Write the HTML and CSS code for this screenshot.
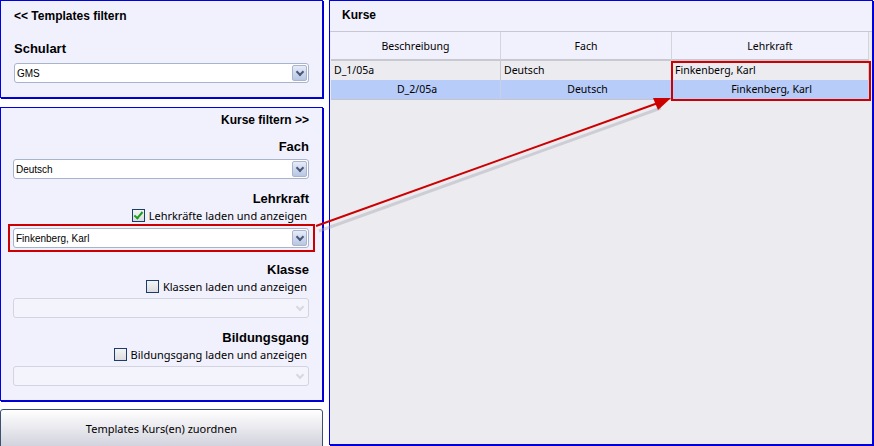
FILE: index.html
```html
<!DOCTYPE html>
<html lang="de">
  <head>
    <meta charset="UTF-8" />
    <title>Templates Kurse</title>
    <link rel="stylesheet" href="styles.css">
  </head>
  <body>
    <div class="page">
      <!-- Left column -->
      <div class="side">
        <div class="panel templates">
          <div class="panel-title">&lt;&lt; Templates filtern</div>
          <div class="label left">Schulart</div>
          <div class="combo"><span>GMS</span><i class="drop"></i></div>
        </div>

        <div class="panel filters">
          <div class="panel-title right">Kurse filtern &gt;&gt;</div>

          <div class="label">Fach</div>
          <div class="combo"><span>Deutsch</span><i class="drop"></i></div>

          <div class="label">Lehrkraft</div>
          <div class="check"><b class="box checked"></b>Lehrkräfte laden und anzeigen</div>
          <div class="marked">
            <div class="combo"><span>Finkenberg, Karl</span><i class="drop"></i></div>
          </div>

          <div class="label">Klasse</div>
          <div class="check"><b class="box"></b>Klassen laden und anzeigen</div>
          <div class="combo disabled"><span></span><i class="drop"></i></div>

          <div class="label">Bildungsgang</div>
          <div class="check"><b class="box"></b>Bildungsgang laden und anzeigen</div>
          <div class="combo disabled"><span></span><i class="drop"></i></div>
        </div>

        <button class="assign">Templates Kurs(en) zuordnen</button>
      </div>

      <!-- Right panel -->
      <div class="panel courses">
        <div class="courses-title">Kurse</div>
        <div class="grid">
          <div class="head">Beschreibung</div>
          <div class="head">Fach</div>
          <div class="head">Lehrkraft</div>

          <div class="cell">D_1/05a</div>
          <div class="cell">Deutsch</div>
          <div class="cell">Finkenberg, Karl</div>

          <div class="cell sel">D_2/05a</div>
          <div class="cell sel">Deutsch</div>
          <div class="cell sel">Finkenberg, Karl</div>
        </div>
        <div class="hilite"></div>
      </div>

      <svg class="arrow" width="874" height="446" viewBox="0 0 874 446">
        <line x1="318" y1="228" x2="660" y2="105" stroke="#a0a0b0" stroke-width="3" opacity="0.4" transform="translate(1 3)" />
        <line x1="316" y1="226" x2="658" y2="103" stroke="#cc0000" stroke-width="2" />
        <polygon points="671,98 653,98 658,110" fill="#cc0000" />
      </svg>
    </div>
  </body>
</html>
```

FILE: styles.css
```css
body {
  margin: 0;
  padding: 0;
  font-family: "Liberation Sans", Arial, sans-serif;
  background: #ffffff;
  color: #000;
}

.page {
  position: relative;
  width: 874px;
  height: 446px;
  overflow: hidden;
  display: flex;
  gap: 6px;
}

.side {
  width: 323px;
  display: flex;
  flex-direction: column;
}

.panel {
  background: #f1f1fd;
  border: 1px solid #0000e6;
  box-shadow: 1px 1px 0 #0000c8;
  box-sizing: border-box;
  flex-shrink: 0;
}

.templates {
  height: 98px;
  padding: 8px 13px 0 13px;
}

.filters {
  position: relative;
  margin-top: 9px;
  height: 294px;
  padding: 5px 13px 0 12px;
}

.panel-title {
  font-size: 12px;
  font-weight: bold;
  height: 14px;
  line-height: 14px;
}

.panel-title.right {
  text-align: right;
}

.label {
  font-size: 13px;
  font-weight: bold;
  text-align: right;
  margin-top: 12px;
  height: 15px;
  line-height: 15px;
}

.label.left {
  text-align: left;
  margin-top: 18px;
}

.templates .combo {
  margin-top: 7px;
}

.combo {
  display: flex;
  align-items: center;
  height: 20px;
  box-sizing: border-box;
  margin-top: 5px;
  background: #fff;
  border: 1px solid #a8b4cc;
  border-radius: 3px;
  font-size: 10px;
  padding: 0 1px 0 2px;
}

.combo span {
  flex: 1;
}

.drop {
  width: 15px;
  height: 16px;
  border: 1px solid #aab4d0;
  border-radius: 2px;
  box-sizing: border-box;
  background: linear-gradient(#e6ecf8, #b8c6e2);
  position: relative;
}

.drop::after {
  content: "";
  position: absolute;
  left: 4px;
  top: 3px;
  width: 4px;
  height: 4px;
  border-right: 2px solid #4a5878;
  border-bottom: 2px solid #4a5878;
  transform: rotate(45deg);
}

.combo.disabled {
  background: #f4f4fc;
  border-color: #d4d4e0;
  margin-bottom: 1px;
}

.combo.disabled .drop {
  background: none;
  border-color: transparent;
}

.combo.disabled .drop::after {
  border-color: #d8d8e2;
}

.marked {
  margin: 2px -6px -2px -5px;
  padding: 2px 4px 2px 3px;
  border: 2px solid #cc0000;
}

.marked .combo {
  margin-top: 0;
}

.check {
  display: flex;
  justify-content: flex-end;
  align-items: center;
  gap: 4px;
  font-family: "Noto Sans", sans-serif;
  font-size: 11px;
  margin-top: 2px;
  padding-right: 2px;
  height: 14px;
}

.box {
  width: 11px;
  height: 11px;
  border: 1px solid #1c3c6c;
  background: linear-gradient(#f4f4f4, #dcdce0);
  position: relative;
}

.box.checked::after {
  content: "";
  position: absolute;
  left: 3px;
  top: 0px;
  width: 3px;
  height: 7px;
  border-right: 2px solid #1aa01a;
  border-bottom: 2px solid #1aa01a;
  transform: rotate(40deg);
}

.assign {
  flex-shrink: 0;
  margin-top: 8px;
  height: 40px;
  border: 1px solid #3c5070;
  border-radius: 3px;
  background: linear-gradient(#ffffff, #d0d0dc);
  font-family: "Noto Sans", sans-serif;
  font-size: 11px;
  color: #000;
  padding: 0 0 2px 0;
}

.courses {
  position: relative;
  flex: 1;
  margin-right: 1px;
  height: 445px;
  background: #ececf0;
}

.courses-title {
  background: #f1f1fd;
  font-size: 12px;
  font-weight: bold;
  padding: 7px 12px 0 12px;
  height: 23px;
  border-bottom: 1px solid #c8c8d4;
}

.grid {
  display: grid;
  grid-template-columns: 170px 171px 197px;
  font-family: "Noto Sans", sans-serif;
  font-size: 10.5px;
  margin-left: 1px;
  border-bottom: 1px solid #c4c4cc;
  width: 538px;
}

.head {
  background: #f1f1fd;
  height: 29px;
  line-height: 29px;
  text-align: center;
  border-right: 1px solid #d4d4dc;
  border-bottom: 2px solid #c8c8d0;
  box-sizing: border-box;
}

.cell {
  height: 19px;
  line-height: 19px;
  padding-left: 3px;
  border-right: 1px solid #c8c8d0;
  background: #ececf0;
}

.cell.sel {
  background: #b8ccfa;
  text-align: center;
  border-right-color: #c8d0e8;
}

.hilite {
  position: absolute;
  left: 341px;
  top: 60px;
  width: 200px;
  height: 40px;
  box-sizing: border-box;
  border: 2px solid #cc0000;
}

.arrow {
  position: absolute;
  left: 0;
  top: 0;
  pointer-events: none;
}
```
